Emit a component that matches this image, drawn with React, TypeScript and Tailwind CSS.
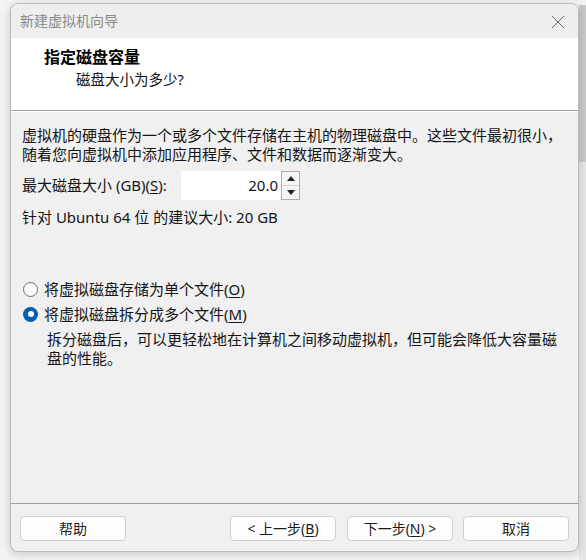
import React from "react";

const F = { fontFamily: '"Noto Sans", "Noto Sans CJK SC", sans-serif' };

function U({ c }: { c: string }) {
  return <span className="underline underline-offset-[2px] decoration-[1px]">{c}</span>;
}

function Radio({ checked }: { checked: boolean }) {
  return checked ? (
    <span className="w-[15px] h-[15px] rounded-full bg-[#005fb8] flex items-center justify-center shrink-0">
      <span className="w-[6px] h-[6px] rounded-full bg-white" />
    </span>
  ) : (
    <span className="w-[15px] h-[15px] rounded-full border border-[#6e6e6e] bg-[#fbfbfb] shrink-0" />
  );
}

function Btn({ children, cls }: { children: React.ReactNode; cls?: string }) {
  return (
    <div
      className={
        "h-[25px] w-[106px] rounded-[4px] border border-[#d0d0d0] bg-[#fdfdfd] flex items-center justify-center text-[14px] text-[#1b1b1b] leading-none " +
        (cls || "")
      }
    >
      {children}
    </div>
  );
}

export default function App() {
  return (
    <div className="relative w-[586px] h-[560px] bg-[#f4f4f4] overflow-hidden pl-[10px] pt-[3px]" style={F}>
      <div className="absolute right-0 top-[5px] w-[7px] h-[157px] bg-[#c9c9c9]" />
      <div className="absolute right-0 top-[162px] w-[7px] h-[398px] bg-[#e6e6e6]" />
      <div className="relative w-[569px] h-[549px] rounded-[8px] border border-[#b9b9b9] bg-[#f0f0f0] shadow-[0_2px_10px_rgba(0,0,0,0.18)] flex flex-col overflow-hidden">
        {/* title bar */}
        <div className="h-[34px] shrink-0 bg-[#eeeeee] flex items-center justify-between pl-[9px] pr-[13px]">
          <span className="text-[14px] text-[#8a8a8a] leading-none">新建虚拟机向导</span>
          <svg width="14" height="14" viewBox="0 0 14 14" className="mt-[1px]">
            <path d="M1 1 L13 13 M13 1 L1 13" stroke="#6b6b6b" strokeWidth="1" fill="none" />
          </svg>
        </div>
        {/* header */}
        <div className="h-[72px] shrink-0 bg-white pt-[9px] pl-[33px]">
          <div className="text-[16px] font-bold leading-[20px] text-black">指定磁盘容量</div>
          <div className="text-[14.5px] leading-[20px] mt-[2px] pl-[32px] text-[#111]">磁盘大小为多少?</div>
        </div>
        <div className="h-px shrink-0 bg-[#a0a0a0]" />
        <div className="h-px shrink-0 bg-[#ffffff]" />
        {/* body */}
        <div className="flex-1 pl-[11px] pt-[14px] text-[15px] text-[#141414]">
          <div className="leading-[19px]">
            虚拟机的硬盘作为一个或多个文件存储在主机的物理磁盘中。这些文件最初很小，
            <br />
            随着您向虚拟机中添加应用程序、文件和数据而逐渐变大。
          </div>
          <div className="flex items-center mt-[7px] h-[29px]">
            <div className="w-[159px] leading-[19px]">
              最大磁盘大小 (GB)(<U c="S" />):
            </div>
            <div className="h-[29px] w-[100px] bg-white flex items-center justify-end pr-[3px] text-[15px] text-[#141414]">
              20.0
            </div>
            <div className="h-[29px] w-[19px] border border-[#adadad] bg-[#f5f5f5] flex flex-col">
              <div className="flex-1 flex items-center justify-center border-b border-[#d4d4d4]">
                <svg width="8" height="5" viewBox="0 0 8 5">
                  <path d="M0 5 L4 0 L8 5 Z" fill="#222" />
                </svg>
              </div>
              <div className="flex-1 flex items-center justify-center">
                <svg width="8" height="5" viewBox="0 0 8 5">
                  <path d="M0 0 L4 5 L8 0 Z" fill="#222" />
                </svg>
              </div>
            </div>
          </div>
          <div className="leading-[19px] mt-[8px]">针对 Ubuntu 64 位 的建议大小: 20 GB</div>
          <div className="flex items-center gap-[6px] h-[20px] mt-[52px] pl-px">
            <Radio checked={false} />
            <span className="leading-[19px]">
              将虚拟磁盘存储为单个文件(<U c="O" />)
            </span>
          </div>
          <div className="flex items-center gap-[6px] h-[20px] mt-[5px] pl-px">
            <Radio checked={true} />
            <span className="leading-[19px]">
              将虚拟磁盘拆分成多个文件(<U c="M" />)
            </span>
          </div>
          <div className="leading-[19px] mt-[6px] pl-[25px]">
            拆分磁盘后，可以更轻松地在计算机之间移动虚拟机，但可能会降低大容量磁
            <br />
            盘的性能。
          </div>
        </div>
        {/* footer */}
        <div className="h-px shrink-0 bg-[#a0a0a0]" />
        <div className="h-[47px] shrink-0 flex items-start pt-[12px] px-[9px]">
          <Btn>帮助</Btn>
          <div className="flex-1" />
          <Btn cls="w-[105px]">
            &lt; 上一步(<U c="B" />)
          </Btn>
          <Btn cls="ml-[11px]">
            下一步(<U c="N" />) &gt;
          </Btn>
          <Btn cls="ml-[10px]">取消</Btn>
        </div>
      </div>
    </div>
  );
}
